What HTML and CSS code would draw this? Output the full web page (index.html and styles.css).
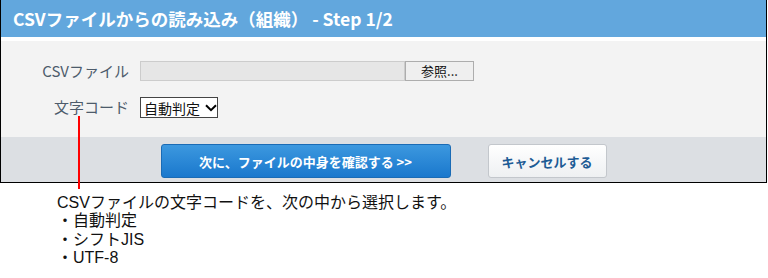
FILE: index.html
```html
<!DOCTYPE html>
<html lang="ja">
<head>
<meta charset="utf-8">
<link rel="stylesheet" href="styles.css">
</head>
<body>
<div class="page">
  <div class="dialog">
    <div class="dialog-header">CSVファイルからの読み込み（組織） - Step 1/2</div>
    <div class="dialog-body">
      <div class="form-row">
        <div class="form-label">CSVファイル</div>
        <div class="file-input">
          <div class="file-path"></div>
          <div class="file-button">参照...</div>
        </div>
      </div>
      <div class="form-row">
        <div class="form-label">文字コード</div>
        <div class="select-box">
          <span>自動判定</span>
          <svg class="chevron" width="12" height="8" viewBox="0 0 12 8"><path d="M1 1.2 L6 6.2 L11 1.2" fill="none" stroke="#000" stroke-width="2"/></svg>
        </div>
      </div>
    </div>
    <div class="dialog-footer">
      <div class="btn btn-primary">次に、ファイルの中身を確認する &gt;&gt;</div>
      <div class="btn btn-cancel">キャンセルする</div>
    </div>
  </div>
  <div class="callout-line"></div>
  <div class="note">
    <div class="note-line">CSVファイルの文字コードを、次の中から選択します。</div>
    <div class="note-line">・自動判定</div>
    <div class="note-line">・シフトJIS</div>
    <div class="note-line">・UTF-8</div>
  </div>
</div>
</body>
</html>
```

FILE: styles.css
```css
html, body {
  margin: 0;
  padding: 0;
  background: #ffffff;
}
body {
  font-family: "Noto Sans CJK JP", "Noto Sans", sans-serif;
  width: 768px;
  height: 278px;
  overflow: hidden;
}
.page {
  position: relative;
  width: 768px;
  height: 278px;
}
.dialog {
  width: 765px;
  border-left: 1px solid #000;
  border-right: 1px solid #000;
  border-bottom: 1px solid #000;
  background: #fff;
}
.dialog-header {
  height: 37px;
  background: #62a7dd;
  color: #fff;
  font-weight: bold;
  font-size: 17.5px;
  line-height: 37px;
  padding-left: 12px;
  white-space: nowrap;
}
.dialog-body {
  margin-top: 4px;
  background: #f3f3f3;
  height: 96px;
  box-sizing: border-box;
  padding-top: 20px;
  display: flex;
  flex-direction: column;
  gap: 16px;
}
.form-row {
  display: flex;
  align-items: center;
  height: 20px;
}
.form-label {
  width: 128px;
  text-align: right;
  font-size: 15px;
  color: #4d5b6b;
  line-height: 20px;
  margin-right: 11px;
  white-space: nowrap;
}
.file-input {
  display: flex;
  height: 20px;
}
.file-path {
  width: 265px;
  height: 20px;
  box-sizing: border-box;
  background: #e6e6e6;
  border: 1px solid #cccccc;
}
.file-button {
  width: 69px;
  height: 20px;
  box-sizing: border-box;
  background: #efefef;
  border: 1px solid #adadad;
  font-size: 13px;
  line-height: 18px;
  text-align: center;
  color: #111;
}
.select-box {
  width: 78px;
  height: 21px;
  box-sizing: border-box;
  border: 1px solid #444;
  background: #fff;
  display: flex;
  align-items: center;
  padding-left: 3px;
  gap: 5px;
  font-size: 14px;
  color: #111;
  margin-top: 1px;
}
.chevron {
  display: block;
}
.dialog-footer {
  height: 45px;
  background: #dcdfe3;
  box-sizing: border-box;
  padding-top: 7px;
  display: flex;
  justify-content: center;
  gap: 36px;
}
.btn {
  height: 34px;
  box-sizing: border-box;
  border-radius: 3px;
  display: flex;
  align-items: center;
  justify-content: center;
  font-weight: bold;
  font-size: 13px;
  white-space: nowrap;
  overflow: hidden;
}
.btn-primary {
  width: 290px;
  background: linear-gradient(#3c98df, #1a78cd);
  border: 1px solid #1a6bb5;
  color: #fff;
}
.btn-cancel {
  width: 119px;
  background: linear-gradient(#ffffff, #eef0f2);
  border: 1px solid #c3c7cc;
  color: #1d5b95;
  margin-left: 1px;
}
.callout-line {
  position: absolute;
  left: 78px;
  top: 116px;
  width: 2px;
  height: 73px;
  background: #ff0000;
}
.note {
  margin-top: 11px;
  margin-left: 57px;
  font-family: "Liberation Sans", "Noto Sans CJK JP", sans-serif;
  font-size: 16px;
  color: #111;
}
.note-line {
  height: 18.4px;
  line-height: 18.4px;
  white-space: nowrap;
}
```
